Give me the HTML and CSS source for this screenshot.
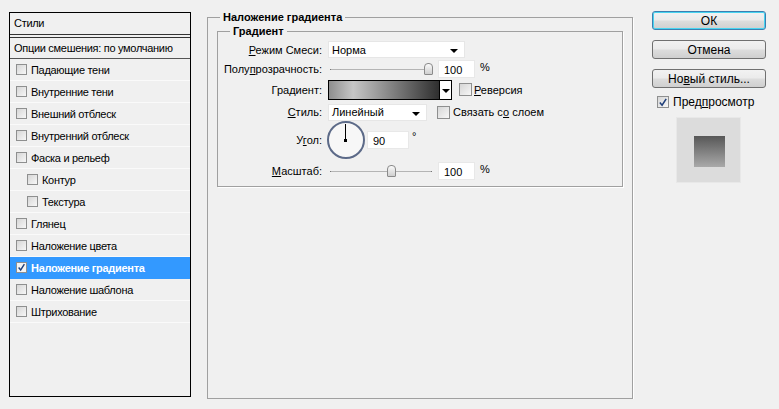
FILE: index.html
```html
<!DOCTYPE html>
<html lang="ru">
<head>
  <meta charset="UTF-8" />
  <title>Стиль слоя</title>
  <link rel="stylesheet" href="styles.css">
</head>
<body>
  <div class="dialog">
    <div class="styles-list">
      <div class="list-head">Стили</div>
      <div class="list-blend">Опции смешения: по умолчанию</div>
      <div class="item"><span class="cb"></span>Падающие тени</div>
      <div class="item"><span class="cb"></span>Внутренние тени</div>
      <div class="item"><span class="cb"></span>Внешний отблеск</div>
      <div class="item"><span class="cb"></span>Внутренний отблеск</div>
      <div class="item"><span class="cb"></span>Фаска и рельеф</div>
      <div class="item sub"><span class="cb"></span>Контур</div>
      <div class="item sub"><span class="cb"></span>Текстура</div>
      <div class="item"><span class="cb"></span>Глянец</div>
      <div class="item"><span class="cb"></span>Наложение цвета</div>
      <div class="item active"><span class="cb"><svg viewBox="0 0 11 11" width="11" height="11"><path d="M2 5.5 L4.5 8.5 L9 1.5" fill="none" stroke="#1f3f7a" stroke-width="1.7"/></svg></span>Наложение градиента</div>
      <div class="item"><span class="cb"></span>Наложение шаблона</div>
      <div class="item"><span class="cb"></span>Штрихование</div>
    </div>

    <fieldset class="group">
      <legend>Наложение градиента</legend>
      <fieldset class="subgroup">
        <legend>Градиент</legend>

        <div class="row r1">
          <span class="lbl"><u>Р</u>ежим Смеси:</span>
          <div class="select blend">Норма<span class="tri"></span></div>
        </div>

        <div class="row r2">
          <span class="lbl">Полу<u>п</u>розрачность:</span>
          <div class="slider"><div class="track"></div><div class="thumb" style="left: 96px"></div></div>
          <div class="num">100</div>
          <span class="unit">%</span>
        </div>

        <div class="row r3">
          <span class="lbl">Градиент:</span>
          <div class="swatch"><div class="ramp"></div><div class="drop"><span class="tri"></span></div></div>
          <span class="cb gap7"></span>
          <span class="opt"><u>Р</u>еверсия</span>
        </div>

        <div class="row r4">
          <span class="lbl"><u>С</u>тиль:</span>
          <div class="select kind">Линейный<span class="tri"></span></div>
          <span class="cb gap10"></span>
          <span class="opt">Связать с<u>о</u> слоем</span>
        </div>

        <div class="row r5">
          <span class="lbl">У<u>г</u>ол:</span>
          <div class="dial"><div class="hand"></div><div class="pin"></div></div>
          <div class="num angle">90</div>
          <span class="deg">°</span>
        </div>

        <div class="row r6">
          <span class="lbl"><u>М</u>асштаб:</span>
          <div class="slider"><div class="track"></div><div class="thumb" style="left: 59px"></div></div>
          <div class="num">100</div>
          <span class="unit">%</span>
        </div>
      </fieldset>
    </fieldset>

    <div class="side">
      <button class="btn default">ОК</button>
      <button class="btn">Отмена</button>
      <button class="btn">Но<u>в</u>ый стиль...</button>
      <div class="preview-check">
        <span class="cb"><svg viewBox="0 0 11 11" width="11" height="11"><path d="M2 5.5 L4.5 8.5 L9 1.5" fill="none" stroke="#1f3f7a" stroke-width="1.7"/></svg></span>
        Пред<u>п</u>росмотр
      </div>
      <div class="preview"><div class="sample"></div></div>
    </div>
  </div>
</body>
</html>
```

FILE: styles.css
```css
body {
  margin: 0;
  background: #f0f0f0;
  font-family: "Liberation Sans", Arial, sans-serif;
  font-size: 11px;
  color: #000;
}

.dialog {
  display: flex;
  align-items: flex-start;
  padding: 11px 0 0 9px;
}

/* left list of styles */

.styles-list {
  box-sizing: border-box;
  width: 182px;
  height: 385px;
  margin-top: 1px;
  border: 1px solid #000;
  background: #f0f0f0;
  letter-spacing: -0.3px;
}

.list-head {
  height: 21px;
  line-height: 20px;
  padding-left: 4px;
  border-bottom: 1px solid #333;
}

.list-blend {
  height: 21px;
  line-height: 22px;
  padding-left: 4px;
  border-top: 2px solid #f0f0f0;
  box-shadow: inset 0 1px 0 #333;
  border-bottom: 1px solid #555;
}

.item {
  display: flex;
  align-items: center;
  height: 21px;
  padding-left: 6px;
  border-bottom: 1px solid #fafafa;
}

.item.sub {
  padding-left: 17px;
}

.item.active {
  background: #3399ff;
  color: #fff;
  font-weight: bold;
  border-bottom-color: #3399ff;
}

.cb {
  box-sizing: border-box;
  display: inline-flex;
  align-items: center;
  justify-content: center;
  width: 11px;
  height: 11px;
  margin-right: 4px;
  border: 1px solid #8e8f8f;
  background: linear-gradient(135deg, #d6d6d6, #f7f7f7);
  flex: none;
}

.item.active .cb {
  background: #f4f4f4;
}

/* middle group */

.group {
  box-sizing: border-box;
  width: 426px;
  height: 388px;
  margin: 0 0 0 16px;
  padding: 1px 9px 0 9px;
  border: 1px solid #a0a0a0;
  box-shadow: 1px 1px 0 #fff;
}

.group legend,
.subgroup legend {
  font-weight: bold;
  padding: 0 3px;
  line-height: 13px;
  margin-left: 3px;
}

.subgroup {
  box-sizing: border-box;
  height: 162px;
  margin: 0;
  padding: 2px 0 0 0;
  border: 1px solid #a0a0a0;
  box-shadow: 1px 1px 0 #fff;
}

.subgroup legend {
  margin-left: 12px;
}

.row {
  display: flex;
  align-items: center;
}

.r1 { height: 19px; }
.r2 { height: 19px; }
.r3 { height: 23px; }
.r4 { height: 22px; }
.r5 { height: 34px; }
.r6 { height: 28px; }

.lbl {
  width: 104px;
  margin-right: 6px;
  text-align: right;
  flex: none;
}

.select {
  box-sizing: border-box;
  display: flex;
  align-items: center;
  justify-content: space-between;
  height: 17px;
  padding: 0 6px 0 3px;
  background: #fff;
  border: 1px solid #e6e6e6;
}

.select.blend { width: 137px; }
.select.kind { width: 99px; }

.tri {
  width: 0;
  height: 0;
  margin-top: 3px;
  border-left: 4px solid transparent;
  border-right: 4px solid transparent;
  border-top: 4px solid #000;
}

.slider {
  position: relative;
  width: 103px;
  height: 14px;
  flex: none;
}

.track {
  margin: 7px 0 0 2px;
  width: 100px;
  height: 1px;
  background: #b4b4b4;
  border-left: 1px solid #777;
  border-right: 1px solid #777;
}

.thumb {
  position: absolute;
  top: 1px;
  box-sizing: border-box;
  width: 9px;
  height: 12px;
  border: 1px solid #8a8a8a;
  border-radius: 4px 4px 1px 1px;
  background: linear-gradient(#fafafa, #cfcfcf);
}

.num {
  box-sizing: border-box;
  width: 37px;
  height: 18px;
  margin-left: 7px;
  padding: 3px 0 0 5px;
  background: #fff;
  border: 1px solid #e8e8e8;
}

.num.angle {
  width: 42px;
  margin-left: 2px;
}

.unit {
  margin-left: 5px;
  margin-top: -4px;
}

.deg {
  margin-left: 3px;
  margin-top: -8px;
}

.swatch {
  box-sizing: border-box;
  display: flex;
  width: 124px;
  height: 20px;
  border: 1px solid #000;
}

.ramp {
  flex: 1;
  background: linear-gradient(to right, #8e8e8e, #c6c6c6 22%, #2f2f2f);
}

.drop {
  display: flex;
  align-items: center;
  justify-content: center;
  width: 11px;
  background: #fff;
  border-left: 1px solid #000;
}

.gap7 { margin-left: 7px; margin-right: 2px; }
.gap10 { margin-left: 10px; margin-right: 3px; }

.cb.gap7, .cb.gap10 {
  width: 13px;
  height: 13px;
}

.dial {
  position: relative;
  box-sizing: border-box;
  width: 38px;
  height: 38px;
  margin-left: -1px;
  border: 2px solid #5c6a88;
  border-radius: 50%;
  background: #f7f7f7;
  flex: none;
}

.hand {
  position: absolute;
  left: 16px;
  top: 1px;
  width: 1px;
  height: 16px;
  background: #000;
}

.pin {
  position: absolute;
  left: 15px;
  top: 16px;
  width: 3px;
  height: 3px;
  background: #000;
}

/* right column */

.side {
  display: flex;
  flex-direction: column;
  width: 114px;
  margin-left: 19px;
}

.btn {
  box-sizing: border-box;
  height: 19px;
  margin-bottom: 10px;
  padding: 0;
  font-family: "Liberation Sans", Arial, sans-serif;
  font-size: 12px;
  color: #000;
  border: 1px solid #707070;
  border-radius: 3px;
  background: linear-gradient(#f2f2f2 0%, #ebebeb 48%, #dddddd 52%, #cfcfcf 100%);
}

.btn.default {
  border-color: #3c7fb1;
  box-shadow: inset 0 0 0 1px #48d4f0;
}

.preview-check {
  display: flex;
  align-items: center;
  margin: -3px 0 0 5px;
  font-size: 12px;
}

.preview-check .cb {
  width: 12px;
  height: 12px;
  margin-right: 4px;
}

.preview {
  box-sizing: border-box;
  width: 65px;
  height: 66px;
  margin: 8px 0 0 24px;
  padding: 18px 0 0 17px;
  background: #dcdcdc;
  border: 1px solid #e8e8e8;
}

.sample {
  width: 31px;
  height: 31px;
  background: linear-gradient(#575757, #a9a9a9);
}
```
